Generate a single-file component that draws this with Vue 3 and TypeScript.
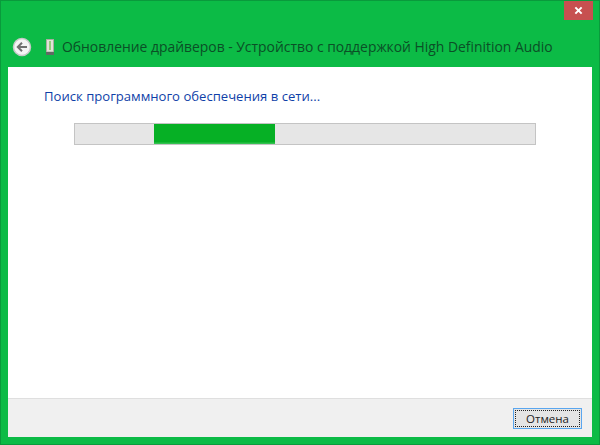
<script setup lang="ts">
const title = "Обновление драйверов - Устройство с поддержкой High Definition Audio";
const status = "Поиск программного обеспечения в сети...";
const bar = { left: 79, width: 121 };
</script>

<template>
  <div class="window">
    <div class="caption">
      <button class="close" aria-label="Закрыть">
        <svg width="9" height="9" viewBox="0 0 10 10">
          <path d="M1.5 1.5 8.5 8.5M8.5 1.5 1.5 8.5" stroke="#fff" stroke-width="2.2" fill="none" />
        </svg>
      </button>
    </div>
    <div class="nav">
      <svg class="back" width="20" height="20" viewBox="0 0 20 20">
        <circle cx="10" cy="10" r="8.5" fill="#f4f4f4" stroke="#c8c8c8" stroke-width="1.5" />
        <path d="M15 10H6.5M10 5.8 5.8 10 10 14.2" stroke="#707070" stroke-width="2" fill="none" />
      </svg>
      <svg class="device" width="8" height="16" viewBox="0 0 8 16">
        <rect x="0.5" y="0.5" width="7" height="12.5" fill="#dfe3d8" stroke="#a8aca0" />
        <rect x="3" y="2" width="2" height="9" fill="#8fce7a" />
        <rect x="0" y="13" width="8" height="3" fill="#5f6b63" />
      </svg>
      <span class="title">{{ title }}</span>
    </div>
    <div class="body">
      <div class="content">
        <div class="status">{{ status }}</div>
        <div class="progress">
          <div class="fill" :style="{ marginLeft: bar.left + 'px', width: bar.width + 'px' }"></div>
        </div>
      </div>
      <div class="footer">
        <button class="cancel"><span>Отмена</span></button>
      </div>
    </div>
  </div>
</template>

<style>
html, body { margin: 0; background: #0cbb46; }
</style>

<style scoped>
.window {
  width: 600px;
  height: 445px;
  box-sizing: border-box;
  display: flex;
  flex-direction: column;
  background: #0cbb46;
  border: 1px solid #0a9a3c;
  font-family: "Open Sans", "Noto Sans", sans-serif;
}
.caption {
  height: 19px;
  display: flex;
  justify-content: flex-end;
  padding-right: 6px;
  flex: none;
}
.close {
  width: 29px;
  height: 19px;
  padding: 0;
  border: none;
  background: #c75050;
  display: flex;
  align-items: center;
  justify-content: center;
}
.nav {
  height: 47px;
  box-sizing: border-box;
  flex: none;
  display: flex;
  align-items: center;
  padding: 6px 0 0 11px;
}
.back { flex: none; }
.device { flex: none; margin-left: 14px; }
.title {
  margin-left: 8px;
  font-size: 13.9px;
  color: #0b4f26;
  white-space: nowrap;
}
.body {
  flex: 1;
  margin: 0 7px 7px;
  display: flex;
  flex-direction: column;
  background: #fff;
  min-height: 0;
}
.content {
  flex: 1;
  padding: 19px 56px 0 36px;
}
.status {
  font-size: 13.1px;
  line-height: 20px;
  color: #0f3fa8;
  white-space: nowrap;
}
.progress {
  margin: 17px 0 0 30px;
  height: 20px;
  display: flex;
  background: #e6e6e6;
  border: 1px solid #c4c4c4;
}
.fill {
  height: 100%;
  background: linear-gradient(#06b025 88%, #3ec65a);
}
.footer {
  height: 39px;
  flex: none;
  box-sizing: border-box;
  display: flex;
  align-items: center;
  justify-content: flex-end;
  padding-right: 10px;
  background: #f0f0f0;
  border-top: 1px solid #dfdfdf;
}
.cancel {
  width: 69px;
  height: 21px;
  padding: 1px;
  box-sizing: border-box;
  background: #e5e5e5;
  border: 1px solid #5aa6ef;
  font: 11.5px "Open Sans", "Noto Sans", sans-serif;
  color: #222;
}
.cancel span {
  display: block;
  height: 100%;
  line-height: 15px;
  box-sizing: border-box;
  border: 1px dotted #222;
}
</style>
